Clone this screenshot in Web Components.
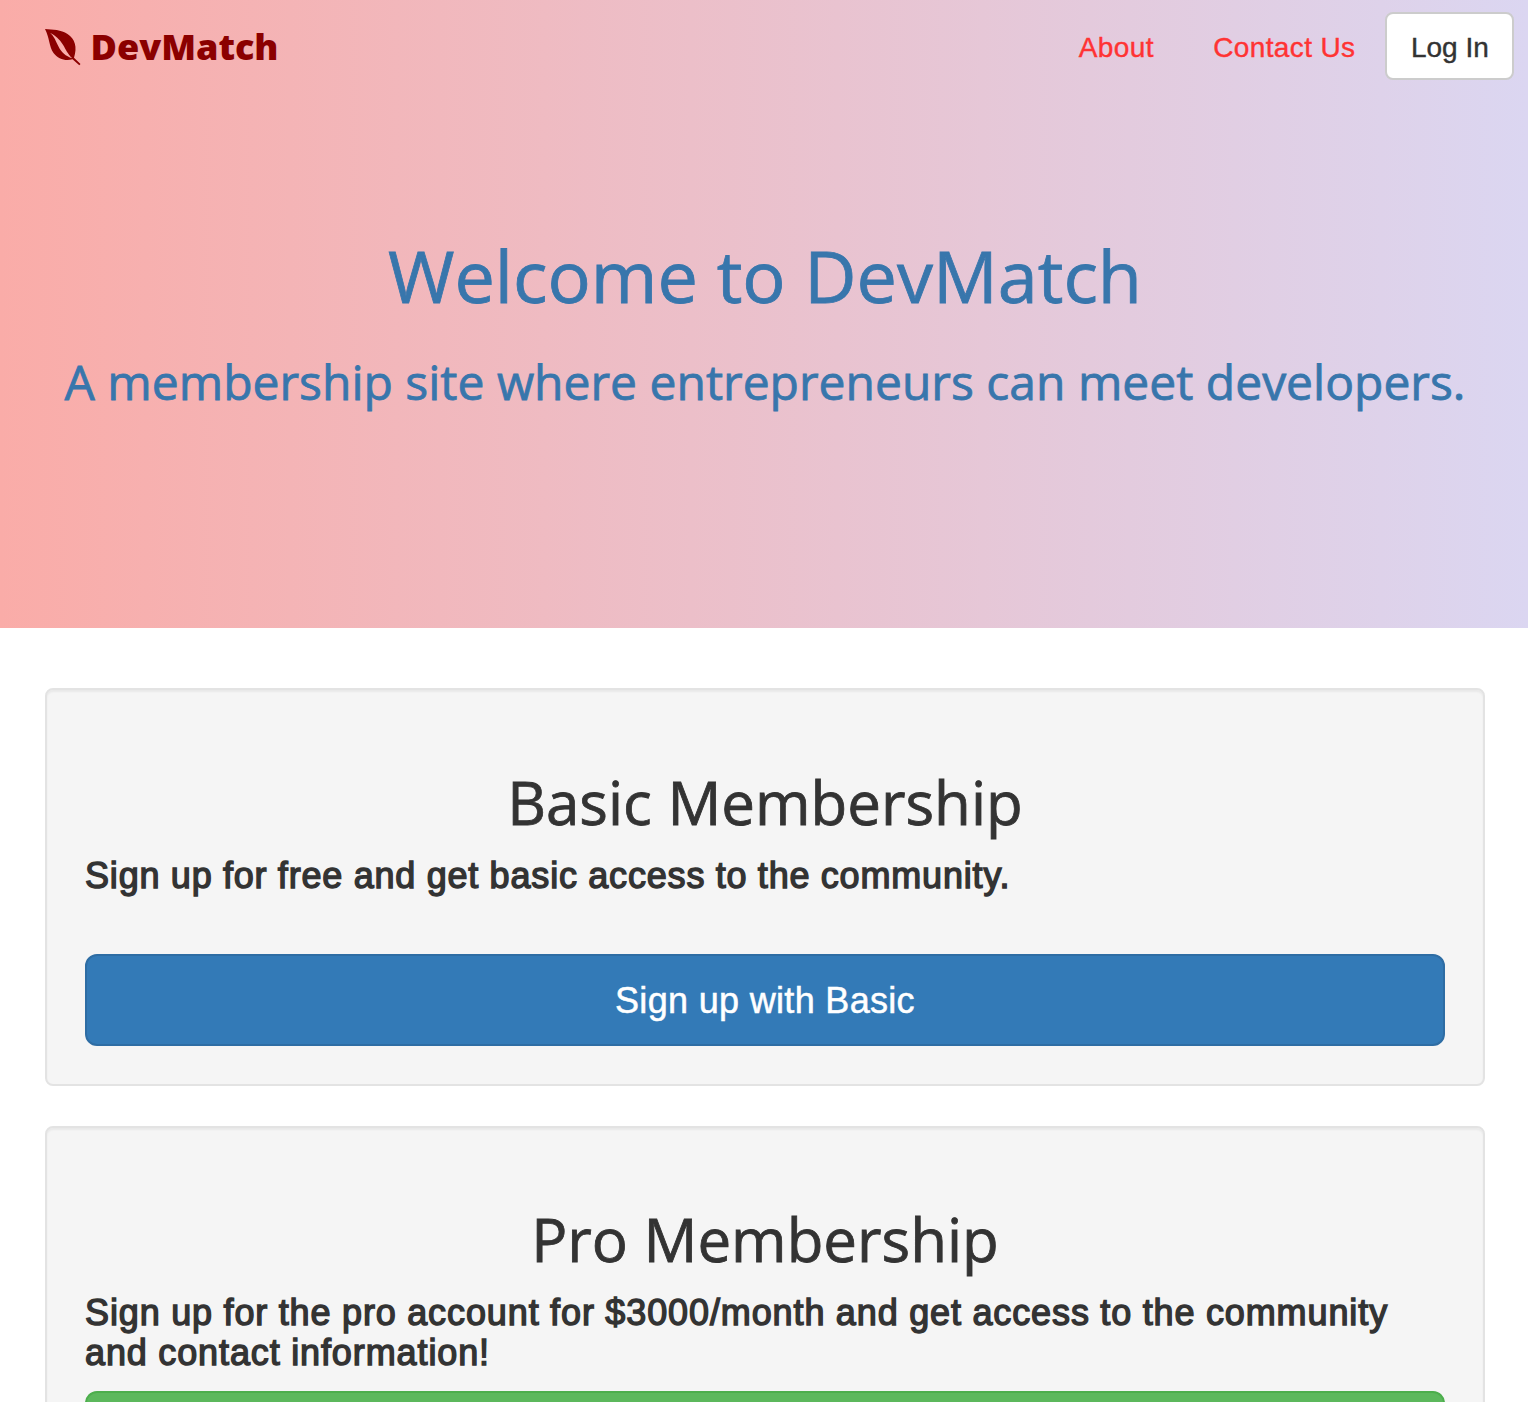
<!DOCTYPE html>
<html lang="en"><head><meta charset="utf-8"><title>DevMatch</title>
<style>html,body{margin:0;height:100%;overflow:hidden;background:#fff;color:#333;font-family:"Liberation Sans",Arial,sans-serif}</style></head>
<body><dev-page></dev-page>
<script>
const define=(name,html)=>customElements.define(name,class extends HTMLElement{
 constructor(){super();this.attachShadow({mode:'open'}).innerHTML=html}
});
define('leaf-icon',`<style>:host{display:block;width:36px;height:37px}svg{display:block}</style>
<svg width="36" height="37" viewBox="0 0 36 37"><path fill="#8b0000" fill-rule="evenodd" d="M0 0C8 .5 16 .8 22.500 5C30 10 32.500 18 29 28.700L35.500 35L34.300 36.300L27.500 30.300C20.500 32.300 13 30 8.500 24C4 17.500 4.500 8.500 0 0ZM5 3.800C9.500 7.500 10.800 12.500 13.500 17.500C16.500 23.500 20.500 27 27.300 29.300C22.500 25 21 20.500 17.800 15.500C14.500 10.300 10.500 6.500 5 3.800Z"/></svg>`);
define('site-nav',`<style>:host{display:flex;align-items:center;height:92px;padding:0 14px 0 45px;box-sizing:border-box}
.brand{display:flex;align-items:center;color:#8b0000;font:800 36px/50px "Open Sans",sans-serif;white-space:nowrap}
.brand leaf-icon{margin-top:2px}.brand span{margin-left:9.5px;padding-top:1px}nav{display:flex;margin-left:auto;align-items:center;font:28px/40px "Liberation Sans",sans-serif;-webkit-text-stroke:.4px currentColor}
a{color:#ff3333;padding:3px 30px 0;white-space:nowrap;letter-spacing:.36px}a+a{padding-left:29.5px}button{font:28px/40px "Liberation Sans",sans-serif;-webkit-text-stroke:.4px currentColor;color:#333;background:#fff;border:2px solid #ccc;border-radius:8px;width:129px;height:68px;padding:3px 0 0;margin-right:-.4px}</style>
<div class="brand"><leaf-icon></leaf-icon><span>DevMatch</span></div><nav><a>About</a><a>Contact Us</a><button>Log In</button></nav>`);
define('hero-banner',`<style>:host{display:block;height:628px;background:linear-gradient(90deg,#faaca8,#dbd6f1);text-align:center;color:#3876ac;font-family:"Open Sans",sans-serif;-webkit-text-stroke:.8px currentColor}
site-nav{-webkit-text-stroke:0}h1{font-weight:400;font-size:72px;line-height:80px;margin:143px 0 0;padding-left:2px}p{font-size:48px;line-height:60px;margin:37px 0 0;padding-left:2px;white-space:nowrap}</style>
<site-nav></site-nav><h1><slot name="title"></slot></h1><p><slot></slot></p>`);
define('plan-card',`<style>:host{display:block;box-sizing:border-box;margin-bottom:40px;padding:38px;border:2px solid #e3e3e3;border-radius:8px;background:#f5f5f5;box-shadow:inset 0 2px 2px rgba(0,0,0,.05)}
h2{font:400 60px/66px "Open Sans",sans-serif;text-align:center;margin:var(--lead) 0 21px;-webkit-text-stroke:.8px currentColor}
h4{font-size:36px;line-height:40px;margin:0 0 var(--gap);font-weight:400;-webkit-text-stroke:1.4px currentColor;letter-spacing:var(--tracking);word-spacing:-.4px}
button{display:block;width:100%;height:92px;padding:2px 0 0;border:2px solid var(--edge);border-radius:12px;background:var(--fill);color:#fff;font:36px/48px "Liberation Sans",sans-serif;letter-spacing:.32px;-webkit-text-stroke:.5px currentColor}</style>
<h2><slot name="title"></slot></h2><h4><slot></slot></h4><button><slot name="action"></slot></button>`);
define('dev-page',`<style>:host{display:block;height:1402px;overflow:hidden}main{padding:60px 43px 0 45px}.basic{--lead:41px;--gap:58px;--edge:#2e6da4;--fill:#337ab7;--tracking:.83px}.pro{--lead:40px;--gap:18px;--edge:#4cae4c;--fill:#5cb85c;--tracking:.9px}</style>
<hero-banner><span slot="title">Welcome to DevMatch</span>A membership site where entrepreneurs can meet developers.</hero-banner>
<main><plan-card class="basic"><span slot="title">Basic Membership</span>Sign up for free and get basic access to the community.<span slot="action">Sign up with Basic</span></plan-card>
<plan-card class="pro"><span slot="title">Pro Membership</span>Sign up for the pro account for $3000/month and get access to the community<br>and contact information!</plan-card></main>`);
</script></body></html>
